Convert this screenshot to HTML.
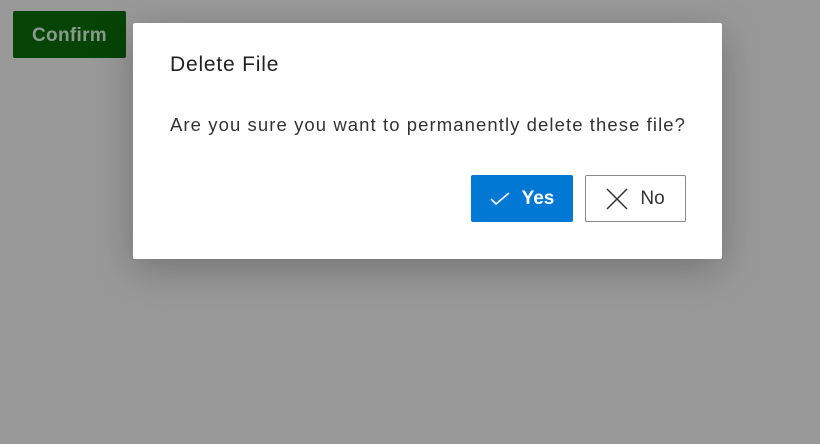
<!DOCTYPE html>
<html><head><style>
body{margin:0;width:820px;height:444px;background:#999;font-family:"Liberation Sans",sans-serif;position:relative;overflow:hidden}
.cf{position:absolute;left:13px;top:11px;width:113px;height:47px;background:#064406;border-radius:2px;color:#8a9a8a;font-size:19px;font-weight:bold;line-height:50px;text-align:center;letter-spacing:0.3px}
.dlg{position:absolute;left:133px;top:23px;width:589px;height:236px;background:#fff;border-radius:2px;box-shadow:0 10px 40px rgba(0,0,0,.25)}
.t{position:absolute;left:37px;top:30px;font-size:21px;letter-spacing:0.8px;color:#222}
.m{position:absolute;left:37px;top:91px;font-size:18.5px;letter-spacing:1.08px;color:#333}
.b{position:absolute;top:152px;height:47px;box-sizing:border-box;border-radius:2px;font-size:19px;font-weight:bold;display:flex;align-items:center;justify-content:center;gap:12px}
.y{left:338px;width:102px;background:#0078d4;color:#fff}
.n{left:452px;width:101px;border:1px solid #8a8886;color:#333;font-weight:normal}
</style></head><body>
<div class="cf">Confirm</div>
<div class="dlg">
<div class="t">Delete File</div>
<div class="m">Are you sure you want to permanently delete these file?</div>
<div class="b y"><svg width="20" height="14" viewBox="0 0 20 14"><path d="M1 7l5 5L19 1" fill="none" stroke="#fff" stroke-width="1.6"/></svg>Yes</div>
<div class="b n"><svg width="22" height="22" viewBox="0 0 22 22"><path d="M1 1L21 21M21 1L1 21" stroke="#333" stroke-width="1.5"/></svg>No</div>
</div>
</body></html>
